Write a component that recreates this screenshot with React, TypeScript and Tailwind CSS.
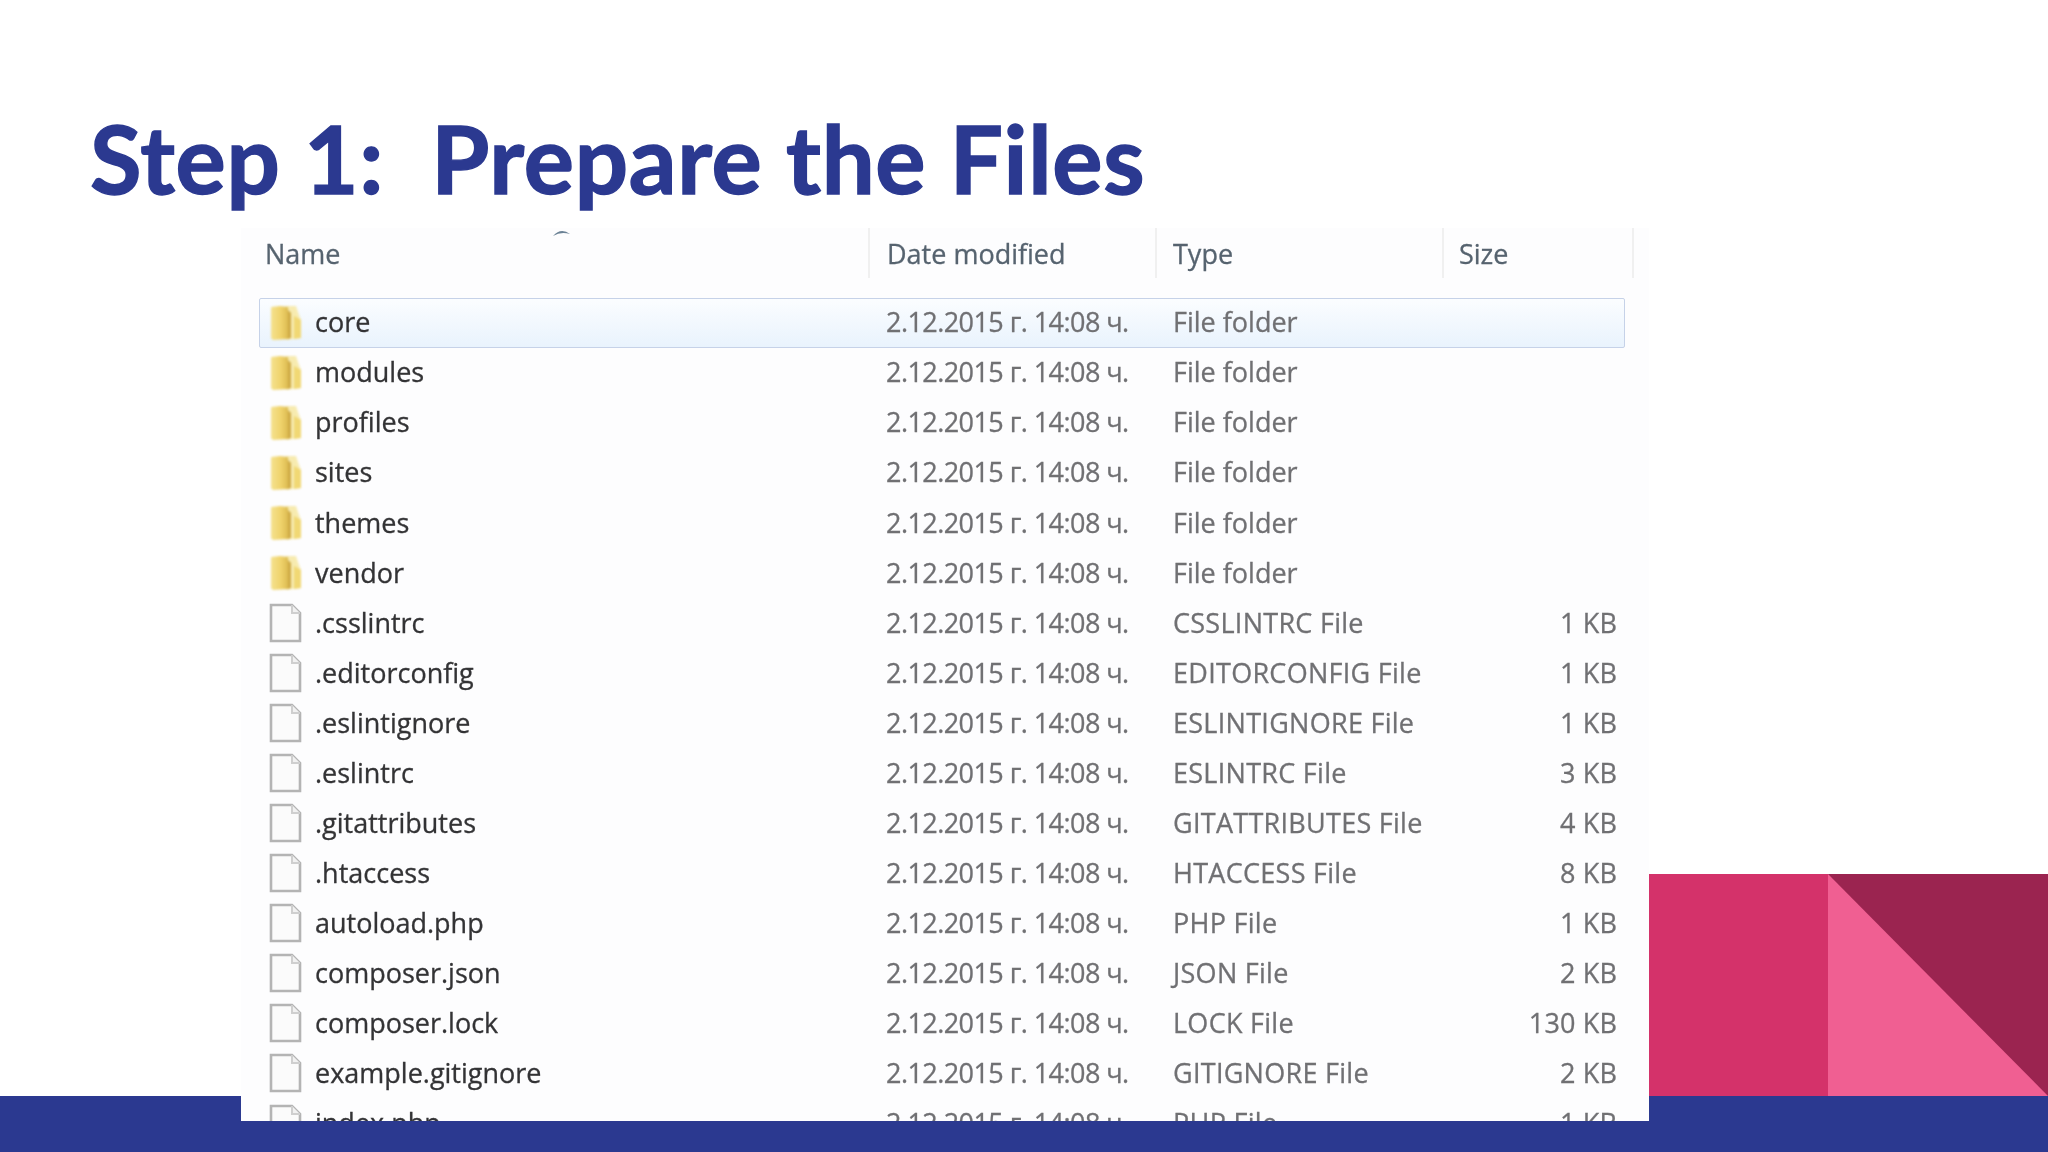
const rows: [string, string, string, boolean][] = [
  ["core", "File folder", "", true],
  ["modules", "File folder", "", true],
  ["profiles", "File folder", "", true],
  ["sites", "File folder", "", true],
  ["themes", "File folder", "", true],
  ["vendor", "File folder", "", true],
  [".csslintrc", "CSSLINTRC File", "1 KB", false],
  [".editorconfig", "EDITORCONFIG File", "1 KB", false],
  [".eslintignore", "ESLINTIGNORE File", "1 KB", false],
  [".eslintrc", "ESLINTRC File", "3 KB", false],
  [".gitattributes", "GITATTRIBUTES File", "4 KB", false],
  [".htaccess", "HTACCESS File", "8 KB", false],
  ["autoload.php", "PHP File", "1 KB", false],
  ["composer.json", "JSON File", "2 KB", false],
  ["composer.lock", "LOCK File", "130 KB", false],
  ["example.gitignore", "GITIGNORE File", "2 KB", false],
  ["index.php", "PHP File", "1 KB", false],
];

function FolderIcon() {
  return (
    <svg width="34" height="38" viewBox="0 0 34 38" className="blur-[0.8px]">
      <defs>
        <linearGradient id="fa" x1="0" y1="0" x2="1" y2="0">
          <stop offset="0" stopColor="#f5e28f" />
          <stop offset="0.6" stopColor="#efd26a" />
          <stop offset="1" stopColor="#dcbb52" />
        </linearGradient>
      </defs>
      <path d="M17 2h10l3 9 2 5v18l-15 2z" fill="#f7ebb0" />
      <path d="M2 3l9-1 8 1v32l-15 1-2-2z" fill="url(#fa)" />
      <path d="M19 6l3 3v25l-3 1z" fill="#cfaa45" />
      <path d="M25 12l7 4v18l-7 1z" fill="#f1d874" />
    </svg>
  );
}

function FileIcon() {
  return (
    <svg width="33" height="40" viewBox="0 0 33 40" className="blur-[0.7px]">
      <path d="M2 2h21l8 8v28H2z" fill="#fbfbfb" stroke="#b4b4b4" strokeWidth="2.6" />
      <path d="M23 2v8h8" fill="#f1f1f1" stroke="#cfcfcf" strokeWidth="2" />
    </svg>
  );
}

export default function App() {
  return (
    <div className="grid h-[1152px] w-[2048px] grid-cols-1 grid-rows-1 overflow-hidden bg-white font-['Open_Sans',sans-serif]">
      <div className="col-start-1 row-start-1 flex flex-col justify-end">
        <div className="flex h-[222px] justify-end">
          <div className="w-[179px] bg-[#d4326a]" />
          <svg width="220" height="222" viewBox="0 0 220 222" preserveAspectRatio="none" className="block">
            <rect width="220" height="222" fill="#9b2450" />
            <path d="M0 0L220 222H0z" fill="#f05f92" />
          </svg>
        </div>
        <div className="h-[56px] bg-[#2b3990]" />
      </div>

      <div className="col-start-1 row-start-1 flex min-h-0 flex-col">
        <h1 className="flex h-[228px] items-start whitespace-pre pl-[90px] pt-[96px] font-['Lato',sans-serif] text-[94px] leading-[124px] font-bold tracking-[0.7px] text-[#2b3990] [-webkit-text-stroke:1.4px_#2b3990]">
          Step 1:  Prepare the Files
        </h1>
        <div className="ml-[241px] h-[893px] w-[1408px] overflow-hidden bg-[#fdfdfe] text-[27px] [-webkit-text-stroke:0.3px]">
          <div className="relative grid h-[69.5px] grid-cols-[629px_287px_287px_205px] text-[#56636f] blur-[0.7px]">
            <div className="flex h-[50px] items-start border-r-2 border-[#f0f0f0] pl-[24px] pt-[6px]">Name</div>
            <div className="flex h-[50px] items-start border-r-2 border-[#f0f0f0] pl-[17px] pt-[6px]">Date modified</div>
            <div className="flex h-[50px] items-start border-r-2 border-[#f0f0f0] pl-[16px] pt-[6px]">Type</div>
            <div className="mr-[15px] flex h-[50px] items-start border-r-2 border-[#f0f0f0] pl-[15px] pt-[6px]">Size</div>
            <svg width="20" height="10" viewBox="0 0 20 10" className="absolute left-[311px] top-[-1px]">
              <path d="M1 9Q9 0 18 7Q9 4 1 9z" fill="#6b8295" />
            </svg>
          </div>
          {rows.map(([name, type, size, folder], i) => (
            <div
              key={name}
              className={
                "ml-[18px] mr-[24px] box-border grid h-[50.07px] grid-cols-[611px_287px_287px_181px] items-center rounded-[2px] border " +
                (i === 0
                  ? "border-[#c6d2e8] bg-gradient-to-b from-[#fbfdff] to-[#e9f3fd]"
                  : "border-transparent")
              }
            >
              <div className="flex items-center text-[#333335] blur-[0.7px]">
                <span className="flex w-[55px] justify-center pr-[4px]">{folder ? <FolderIcon /> : <FileIcon />}</span>
                {name}
              </div>
              <div className="whitespace-nowrap pl-[15px] tracking-[-0.56px] text-[#707073] blur-[0.7px]">2.12.2015 г. 14:08 ч.</div>
              <div className={"whitespace-nowrap pl-[15px] text-[#707073] blur-[0.7px] " + (folder ? "" : "tracking-[0.28px]")}>{type}</div>
              <div className="pr-[9px] text-right tracking-[0.15px] text-[#707073] blur-[0.7px]">{size}</div>
            </div>
          ))}
        </div>
      </div>
    </div>
  );
}
